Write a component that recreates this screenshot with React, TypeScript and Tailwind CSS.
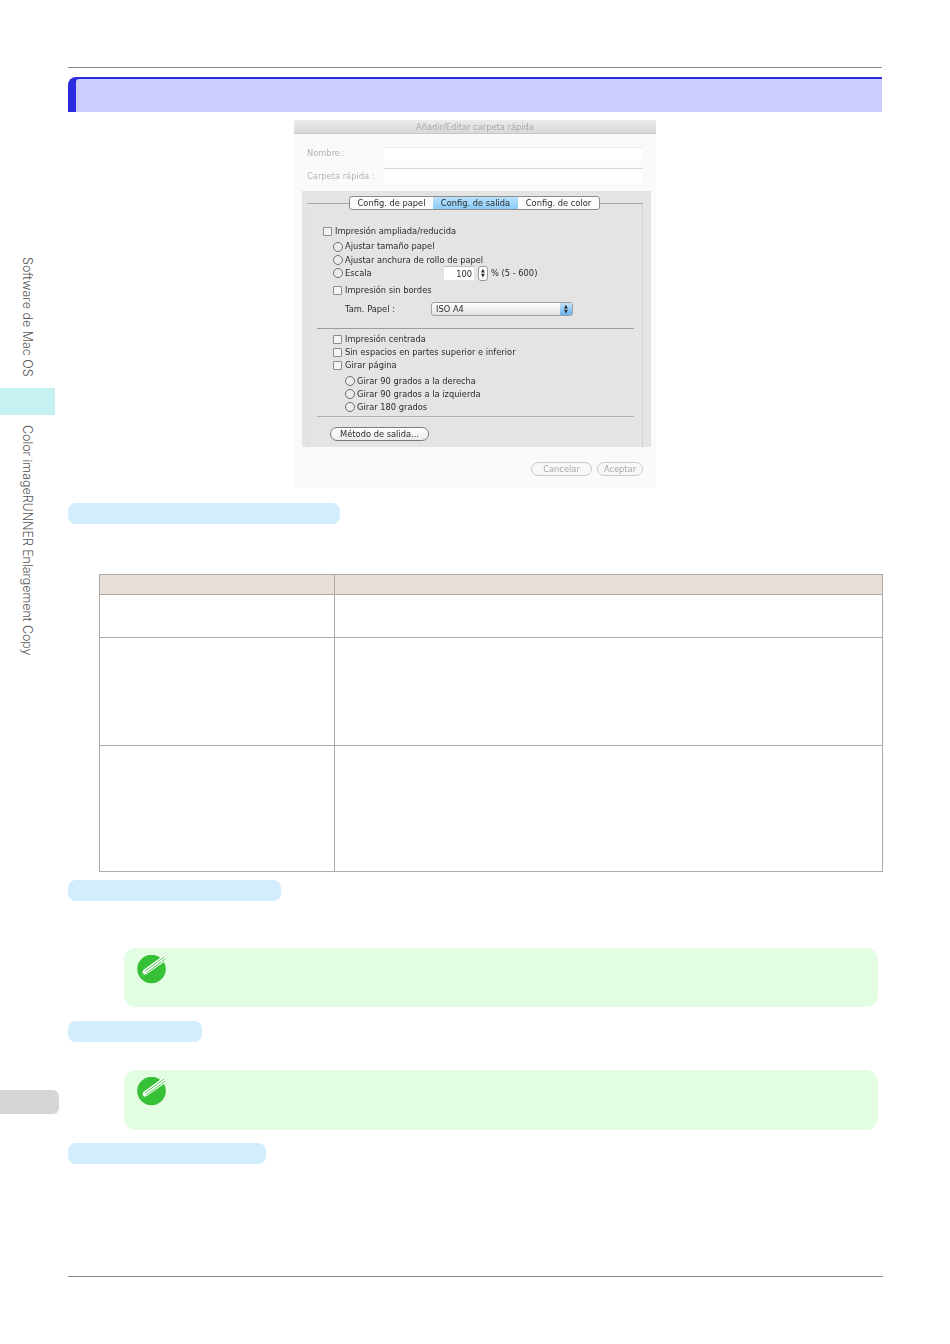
import React from "react";

const Pill = ({ width, className = "" }: { width: string; className?: string }) => (
  <div className={`h-[21px] rounded-[8px] bg-[#d2edfd] ${width} ${className}`} />
);

const Check = () => (
  <span className="mr-[3px] h-[9px] w-[9px] shrink-0 rounded-[1px] border border-[#8c8c8c] bg-[#f4f4f4]" />
);

const Radio = () => (
  <span className="mr-[2px] h-[10px] w-[10px] shrink-0 rounded-full border border-[#6f6f6f] bg-[#ececec]" />
);

const Row = ({ className = "", children }: { className?: string; children: React.ReactNode }) => (
  <div className={`flex h-[13px] items-center whitespace-nowrap ${className}`}>{children}</div>
);

const NoteBox = ({ className = "" }: { className?: string }) => (
  <div className={`ml-[56px] w-[754px] rounded-[12px] bg-[#e3fde3] pl-[13px] pt-[7px] ${className}`}>
    <svg width="32" height="30" viewBox="0 0 32 30">
      <circle cx="14.5" cy="14" r="14.3" fill="#35c035" />
      <path d="M4.7 20.5 L6.3 15 L26.3 0.5 L29.7 5 L10 19 Z" fill="#ffffff" />
      <path d="M7.8 16.2 L27.2 2 M9.4 18 L28.6 3.8" stroke="#35c035" strokeWidth="0.9" fill="none" />
      <path d="M4.7 20.5 L5.5 17.8 L7.4 19.5 Z" fill="#35c035" />
    </svg>
  </div>
);

const Dialog = () => (
  <div className="ml-[226px] mt-[8px] h-[368px] w-[362px] bg-[#fafafa] font-['DejaVu_Sans',sans-serif] text-[8.3px] text-[#2c2c2c] blur-[0.4px]">
    <div className="flex h-[14px] items-center justify-center border-b border-[#c8c8c8] bg-gradient-to-b from-[#ececec] to-[#d9d9d9] pt-[1px] text-[#a9a9a9]">
      Añadir/Editar carpeta rápida
    </div>
    <div className="mt-[13px] flex h-[14px] items-center pl-[13px] text-[#b4b4b4]">
      <span className="w-[77px] pb-[2px]">Nombre :</span>
      <div className="h-full w-[259px] border-t border-[#ececec] bg-white" />
    </div>
    <div className="mt-[7px] flex h-[15px] items-center pl-[13px] text-[#b4b4b4]">
      <span className="w-[77px] pt-[2px]">Carpeta rápida :</span>
      <div className="h-full w-[259px] border-t border-[#d8d8d8] bg-white" />
    </div>
    <div className="ml-[8px] mt-[8px] h-[256px] w-[349px] bg-[#e4e4e4] pt-[5px]">
      <div className="relative z-10 ml-[47px] flex h-[14px] w-[251px] overflow-hidden rounded-[3px] border border-[#8d8d8d] bg-[#fbfbfb] text-center leading-[12px]">
        <span className="w-[83px]">Config. de papel</span>
        <span className="w-[85px] bg-gradient-to-b from-[#b9e0fb] to-[#8accf7]">Config. de salida</span>
        <span className="flex-1">Config. de color</span>
      </div>
      <div className="ml-[5px] -mt-[7px] h-[245px] w-[336px] border-x border-t border-l-[#e0e0e0] border-r-[#d2d2d2] border-t-[#a8a8a8]">
        <Row className="ml-[15px] mt-[21px]">
          <Check />
          Impresión ampliada/reducida
        </Row>
        <Row className="ml-[25px] mt-[2px]">
          <Radio />
          Ajustar tamaño papel
        </Row>
        <Row className="ml-[25px] pt-[1px]">
          <Radio />
          Ajustar anchura de rollo de papel
        </Row>
        <Row className="ml-[25px] pt-[1px]">
          <Radio />
          <span className="w-[99px]">Escala</span>
          <span className="h-[14px] w-[30px] border-t border-[#bdbdbd] bg-white pr-[2px] text-right leading-[14px]">100</span>
          <span className="ml-[4px] flex h-[15px] w-[10px] flex-col items-center justify-center rounded-[3px] border border-[#9a9a9a] bg-white text-[5px] leading-[5px]">
            <span>▲</span>
            <span>▼</span>
          </span>
          <span className="ml-[3px]">% (5 - 600)</span>
        </Row>
        <Row className="ml-[25px] mt-[5px]">
          <Check />
          Impresión sin bordes
        </Row>
        <div className="ml-[37px] mt-[5px] flex h-[14px] items-center">
          <span className="w-[86px]">Tam. Papel :</span>
          <div className="flex h-full w-[142px] items-center justify-between rounded-[3px] border border-[#a0a0a0] bg-gradient-to-b from-[#fdfdfd] via-[#f2f2f2] to-[#e2e2e2] pl-[4px]">
            ISO A4
            <span className="flex h-full w-[12px] flex-col items-center justify-center bg-gradient-to-b from-[#c4e3fa] to-[#6cb2ec] text-[5px] leading-[5px]">
              <span>▲</span>
              <span>▼</span>
            </span>
          </div>
        </div>
        <div className="ml-[9px] mt-[12px] h-px w-[317px] bg-[#9c9c9c]" />
        <Row className="ml-[25px] mt-[4px]">
          <Check />
          Impresión centrada
        </Row>
        <Row className="ml-[25px]">
          <Check />
          Sin espacios en partes superior e inferior
        </Row>
        <Row className="ml-[25px]">
          <Check />
          Girar página
        </Row>
        <Row className="ml-[37px] mt-[2px] pt-[1px]">
          <Radio />
          Girar 90 grados a la derecha
        </Row>
        <Row className="ml-[37px] pt-[1px]">
          <Radio />
          Girar 90 grados a la izquierda
        </Row>
        <Row className="ml-[37px] pt-[1px]">
          <Radio />
          Girar 180 grados
        </Row>
        <div className="ml-[9px] mt-[3px] h-px w-[317px] bg-[#b0b0b0]" />
        <div className="ml-[22px] mt-[10px] flex h-[14px] w-[99px] items-center justify-center rounded-full border border-[#7a7a7a] bg-gradient-to-b from-[#ffffff] to-[#ececec]">
          Método de salida...
        </div>
      </div>
    </div>
    <div className="mt-[15px] flex justify-end gap-[5px] pr-[13px] text-[#a8a8a8]">
      <div className="flex h-[14px] w-[61px] items-center justify-center rounded-full border border-[#c9c9c9] bg-[#f8f8f8]">Cancelar</div>
      <div className="flex h-[14px] w-[46px] items-center justify-center rounded-full border border-[#c9c9c9] bg-[#f8f8f8]">Aceptar</div>
    </div>
  </div>
);

const SideRail = () => (
  <div className="w-[68px] shrink-0 font-['Inter',sans-serif] text-[12.5px] font-light leading-[16px] text-[#555555]">
    <div className="ml-[19px] mt-[257px] h-[122px] whitespace-nowrap [writing-mode:vertical-rl]">Software de Mac OS</div>
    <div className="mt-[9px] h-[27px] w-[55px] bg-[#c5f1f2]" />
    <div className="ml-[19px] mt-[10px] h-[231px] whitespace-nowrap tracking-[-0.06px] [writing-mode:vertical-rl]">Color imageRUNNER Enlargement Copy</div>
    <div className="mt-[434px] h-[24px] w-[59px] rounded-r-[6px] bg-[#d6d6d6]" />
  </div>
);

export default function App() {
  return (
    <div className="flex h-[1344px] w-[950px] overflow-hidden bg-white">
      <SideRail />
      <div className="w-[815px] pt-[67px]">
        <div className="h-px w-[814px] bg-[#8a8a8a]" />
        <div className="mt-[9px] h-[35px] w-[814px] rounded-tl-[8px] bg-[#2b2be0] pl-[8px] pt-[2px]">
          <div className="h-full rounded-tl-[3px] bg-[#ccccff]" />
        </div>
        <Dialog />
        <Pill width="w-[272px]" className="mt-[15px]" />
        <table className="ml-[31px] mt-[50px] w-[784px] table-fixed border-collapse">
          <tbody>
            <tr className="h-[20px] bg-[#e6dfd9]">
              <td className="w-[235px] border border-[#b0a8a2]" />
              <td className="border border-[#b0a8a2]" />
            </tr>
            <tr className="h-[43px]">
              <td className="border border-[#b0a8a2]" />
              <td className="border border-[#b0a8a2]" />
            </tr>
            <tr className="h-[108px]">
              <td className="border border-[#b0a8a2]" />
              <td className="border border-[#b0a8a2]" />
            </tr>
            <tr className="h-[126px]">
              <td className="border border-[#b0a8a2]" />
              <td className="border border-[#b0a8a2]" />
            </tr>
          </tbody>
        </table>
        <Pill width="w-[213px]" className="mt-[8px]" />
        <NoteBox className="mt-[47px] h-[59px]" />
        <Pill width="w-[134px]" className="mt-[14px]" />
        <NoteBox className="mt-[28px] h-[60px]" />
        <Pill width="w-[198px]" className="mt-[13px]" />
        <div className="mt-[112px] h-px w-[815px] bg-[#8a8a8a]" />
      </div>
    </div>
  );
}
